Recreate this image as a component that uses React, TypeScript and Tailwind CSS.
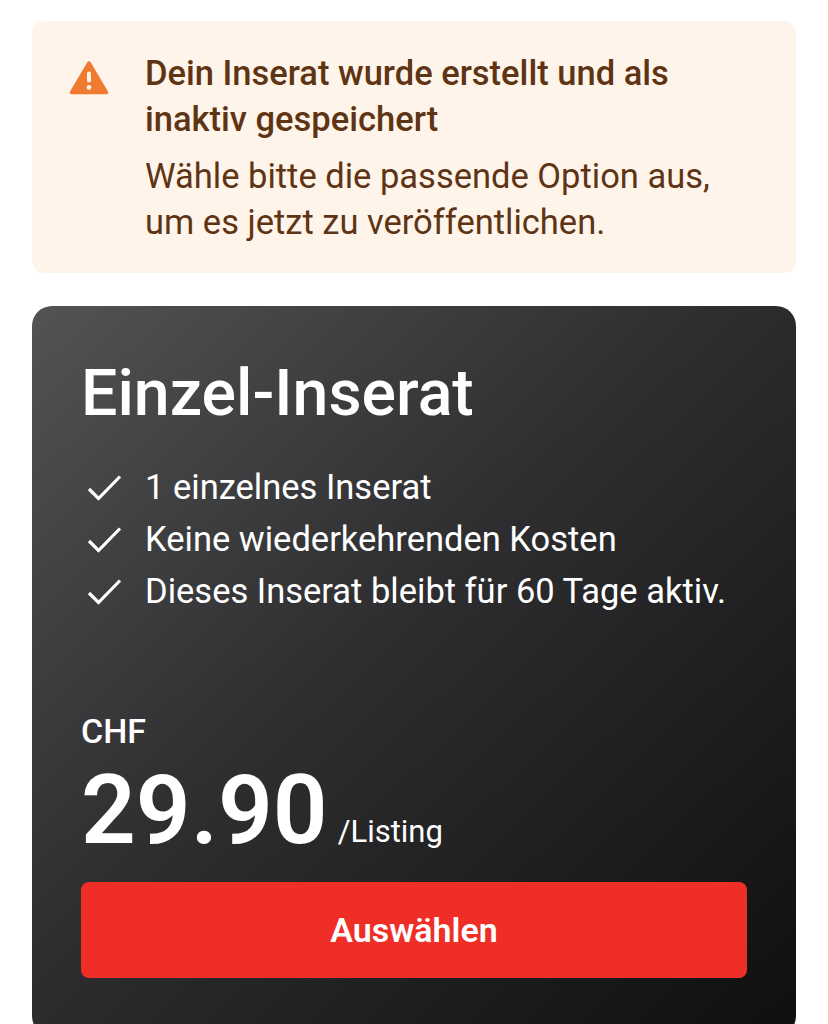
import React from 'react';

const features = ['1 einzelnes Inserat', 'Keine wiederkehrenden Kosten', 'Dieses Inserat bleibt für 60 Tage aktiv.'];

function CheckIcon() {
  return (
    <svg width="36" height="30" viewBox="0 0 36 30" fill="none" className="shrink-0">
      <path d="M2 16L11.5 25.5L33 3.5" stroke="white" strokeWidth="3.2" />
    </svg>
  );
}

export default function App() {
  return (
    <div className="h-[1024px] overflow-hidden bg-white px-8 pt-[21px] font-['Roboto',sans-serif]">
      <div className="flex h-[252px] rounded-xl bg-[#fef4e9] pl-[37px] pt-[29px]">
        <svg width="40" height="36" viewBox="0 0 40 36" className="mt-[10px] shrink-0">
          <path d="M20 3L37.5 32.5H2.5Z" fill="#f07a30" stroke="#f07a30" strokeWidth="3.5" strokeLinejoin="round" />
          <rect x="18" y="11.5" width="4" height="11" rx="2" fill="#fef4e9" />
          <circle cx="20" cy="27.5" r="2.4" fill="#fef4e9" />
        </svg>
        <div className="ml-[36px] text-[#5e3415]">
          <h2 className="text-[34.5px] leading-[46px] font-medium">
            Dein Inserat wurde erstellt und als
            <br />
            inaktiv gespeichert
          </h2>
          <p className="mt-[11px] text-[34.5px] leading-[46px]">
            Wähle bitte die passende Option aus,
            <br />
            um es jetzt zu veröffentlichen.
          </p>
        </div>
      </div>

      <div className="mt-[33px] h-[730px] rounded-[20px] bg-gradient-to-br from-[#525355] via-[#2e2e30] via-45% to-[#0f0f10] px-[49px] pt-[50px] text-white">
        <h1 className="text-[64.4px] leading-[74px] font-medium">Einzel-Inserat</h1>
        <ul className="mt-[32px] flex flex-col">
          {features.map((f) => (
            <li key={f} className="flex h-[52px] items-center gap-[22px] pl-[6px] text-[34.5px]">
              <CheckIcon />
              <span>{f}</span>
            </li>
          ))}
        </ul>
        <div className="mt-[93px] text-[34px] leading-[40px] font-medium">CHF</div>
        <div className="mt-[9px] flex items-end">
          <span className="text-[96px] leading-[100px] font-semibold">29.90</span>
          <span className="mb-[8px] ml-[10px] text-[31px] leading-[40px]">/Listing</span>
        </div>
        <button className="mt-[22px] flex h-[96px] w-full items-center justify-center rounded-lg bg-[#ee2e27] text-[34px] font-semibold text-white">
          Auswählen
        </button>
      </div>
    </div>
  );
}
